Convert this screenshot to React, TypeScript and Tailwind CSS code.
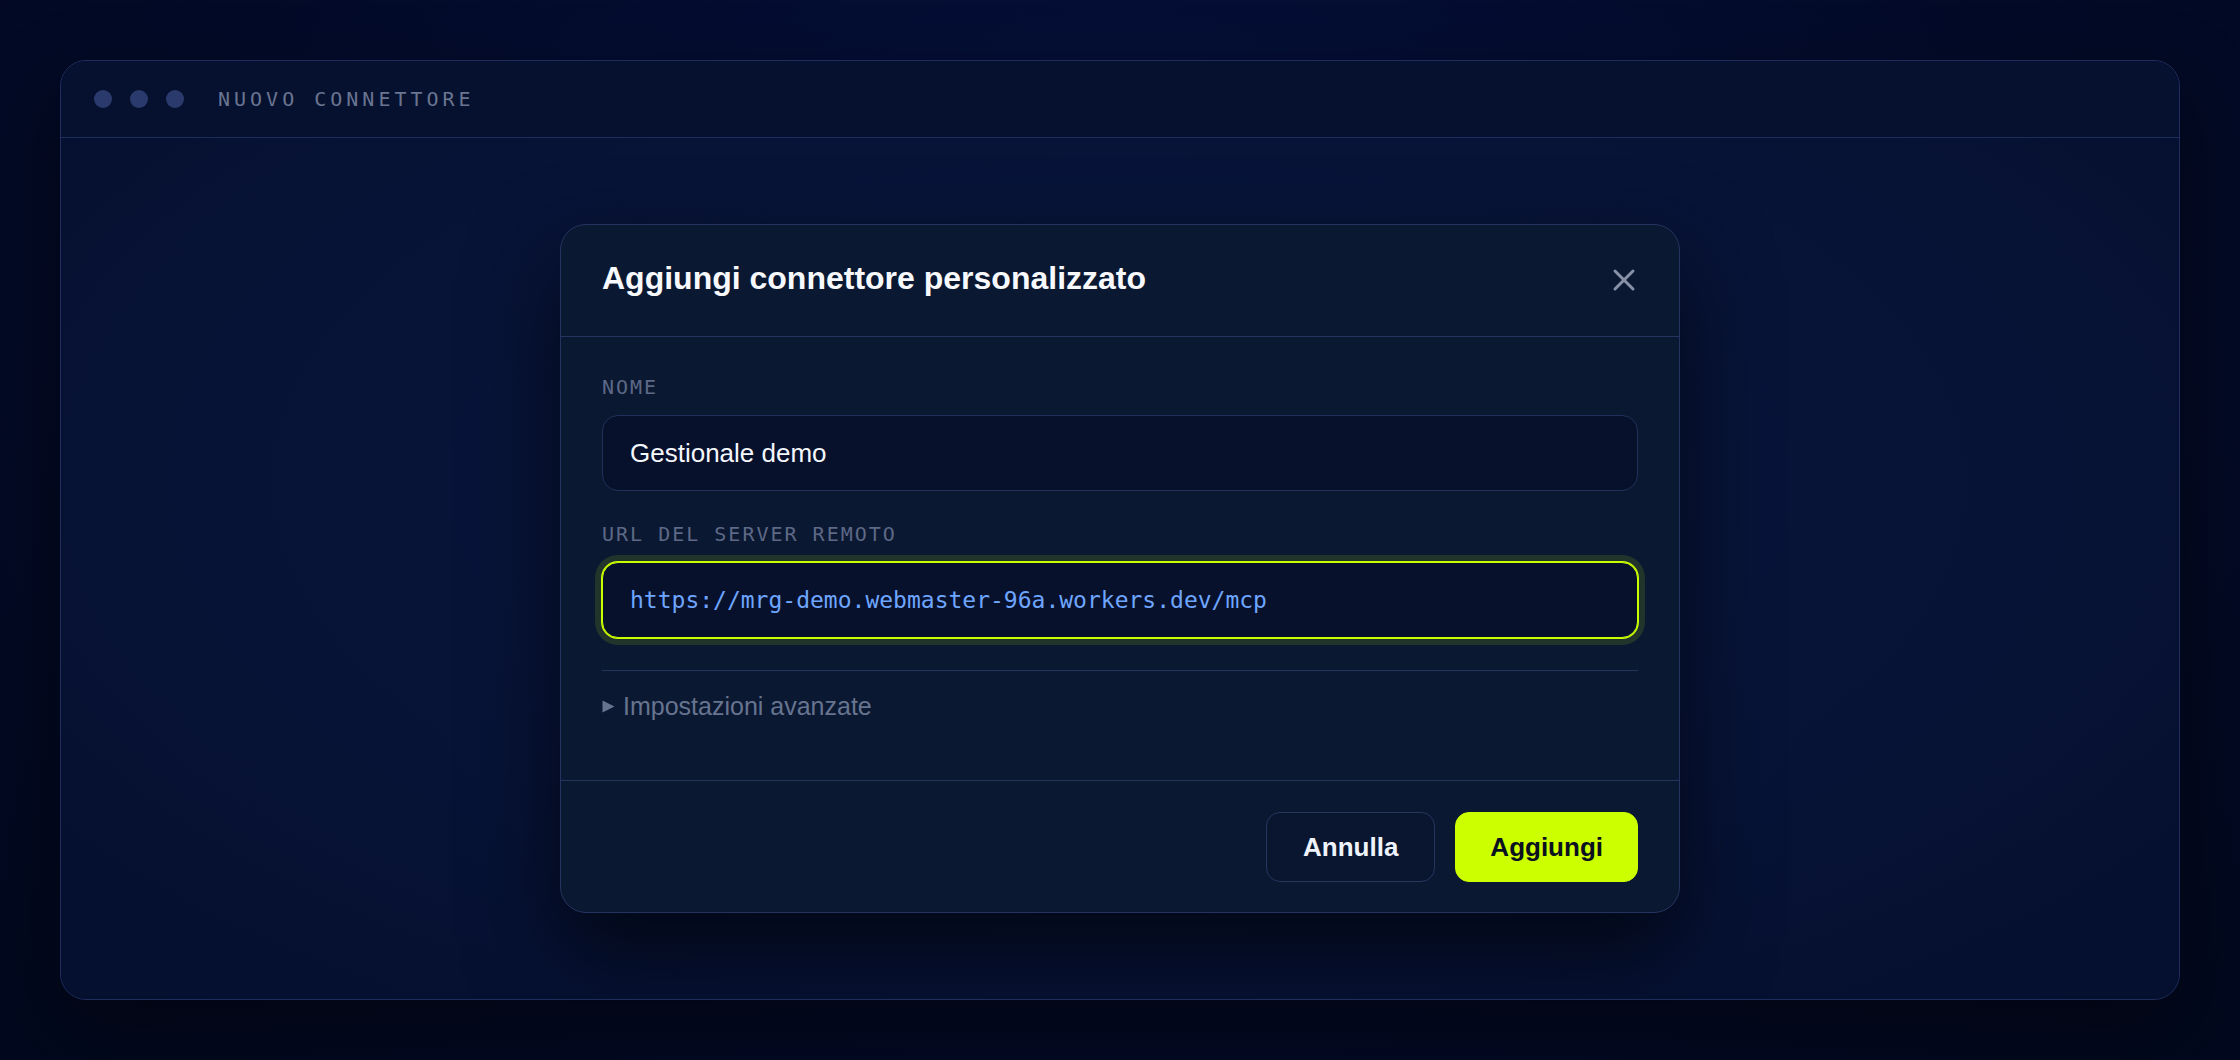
import React from "react";

const sans = "font-['Liberation_Sans',Arial,sans-serif]";
const mono = "font-['DejaVu_Sans_Mono','Liberation_Mono',monospace]";

function Field({ label, value, focused, code }: { label: string; value: string; focused?: boolean; code?: boolean }) {
    return (
        <div className="flex flex-col">
            <div className={`${mono} text-[20px] leading-[24px] tracking-[0.1em] text-[#5d6986] mb-4`}>
                {label}
            </div>
            <div
                className={
                    "h-[76px] flex items-center pl-[27px] rounded-[16px] border bg-[#07112c] " +
                    (focused
                        ? "border-[#ccff00] shadow-[0_0_0_1px_#ccff00,0_0_0_7px_rgba(204,255,0,0.13)]"
                        : "border-[#21305a]")
                }
            >
                {code ? (
                    <span className={`${mono} text-[23px] text-[#6ea6ff]`}>{value}</span>
                ) : (
                    <span className={`${sans} text-[26px] text-[#f4f7fc]`}>{value}</span>
                )}
            </div>
        </div>
    );
}

export default function App() {
    return (
        <div className="w-full h-[1060px] p-[60px] bg-[#030a25] bg-[radial-gradient(ellipse_at_50%_20%,#05103a_0%,#030a27_60%,#02081d_100%)]">
            <div className="h-full flex flex-col rounded-[26px] border border-[#1e2d5e] bg-[#071337] shadow-[0_30px_80px_rgba(0,0,0,0.45)] overflow-hidden">
                {/* title bar */}
                <div className="h-[77px] flex items-center pl-[33px] border-b border-[#1e2d5e] bg-[#06112f]">
                    <div className="flex gap-[18px]">
                        <div className="w-[18px] h-[18px] rounded-full bg-[#2a3a6d]" />
                        <div className="w-[18px] h-[18px] rounded-full bg-[#2a3a6d]" />
                        <div className="w-[18px] h-[18px] rounded-full bg-[#2a3a6d]" />
                    </div>
                    <div className={`${mono} ml-[34px] text-[20px] tracking-[0.2em] text-[#6a7592]`}>NUOVO CONNETTORE</div>
                </div>

                <div className="flex-1 flex items-center justify-center bg-[radial-gradient(ellipse_at_50%_40%,#08163d_0%,#071337_55%,#050f2e_100%)]">
                    <div className="w-[1120px] rounded-[26px] border border-[#25345f] bg-[#0b1832] shadow-[0_40px_90px_rgba(0,0,0,0.6)]">
                        {/* header */}
                        <div className="h-[112px] flex items-start justify-between px-[41px] pt-[34px] border-b border-[#25345f]">
                            <div className={`${sans} text-[32px] leading-[38px] font-bold text-[#f7f9fd]`}>
                                Aggiungi connettore personalizzato
                            </div>
                            <button className="w-7 h-7 mt-[7px] flex items-center justify-center text-[#8891a8]">
                                <svg width="28" height="28" viewBox="0 0 28 28" fill="none" stroke="currentColor" strokeWidth="3" strokeLinecap="round">
                                    <path d="M5 5L23 23M23 5L5 23" />
                                </svg>
                            </button>
                        </div>

                        {/* body */}
                        <div className="px-[41px] pt-[38px] pb-[59px]">
                            <Field label="NOME" value="Gestionale demo" />
                            <div className="h-[31px]" />
                            <Field label="URL DEL SERVER REMOTO" value="https://mrg-demo.webmaster-96a.workers.dev/mcp" focused code />
                            <div className="mt-8 border-t border-[#25345f] pt-[20px]">
                                <div className="flex items-center gap-[8px] text-[#67748f]">
                                    <svg width="13" height="13" viewBox="0 0 13 13" className="mt-[1px]">
                                        <path d="M0.5 0.5L12.5 6.5L0.5 12.5Z" fill="currentColor" />
                                    </svg>
                                    <span className={`${sans} text-[25px] leading-[30px]`}>Impostazioni avanzate</span>
                                </div>
                            </div>
                        </div>

                        {/* footer */}
                        <div className="flex justify-end gap-5 px-[41px] pt-[31px] pb-[30px] border-t border-[#25345f]">
                            <button className={`${sans} px-[36px] py-5 text-[26px] leading-[28px] font-bold text-[#eef3fb] rounded-[14px] border border-[#26365f] bg-[#0a1630]`}>
                                Annulla
                            </button>
                            <button className={`${sans} px-[34px] py-5 text-[26px] leading-[28px] font-bold text-[#0b1020] rounded-[14px] border border-[#ccff00] bg-[#ccff00]`}>
                                Aggiungi
                            </button>
                        </div>
                    </div>
                </div>
            </div>
        </div>
    );
}
